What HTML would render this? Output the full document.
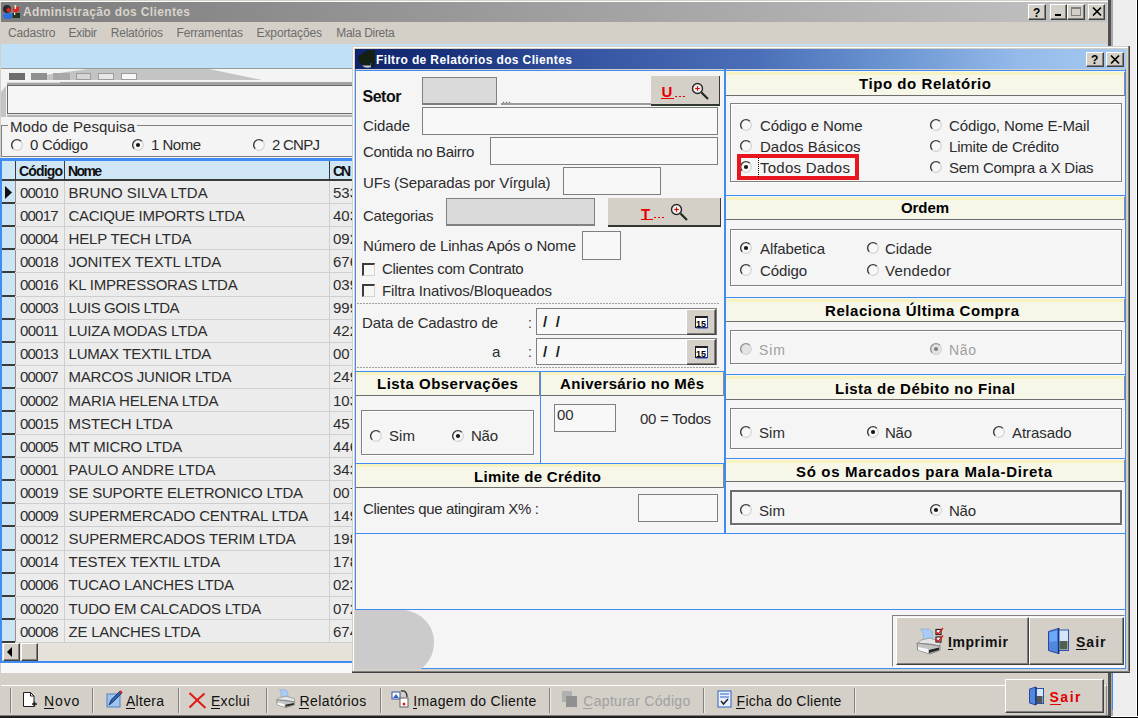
<!DOCTYPE html>
<html><head><meta charset="utf-8"><style>
html,body{margin:0;padding:0;}
body{width:1138px;height:718px;overflow:hidden;position:relative;background:#eeeeee;font-family:'Liberation Sans', sans-serif;}
.a{position:absolute;box-sizing:border-box;}
.t{position:absolute;white-space:pre;font-family:'Liberation Sans', sans-serif;}
svg{position:absolute;overflow:visible;}
</style></head><body>
<div class="a" style="left:0px;top:0px;width:1111px;height:718px;background:#d4d0c8;"></div>
<div class="a" style="left:1108px;top:0px;width:3px;height:718px;background:#505050;"></div>
<div class="a" style="left:0px;top:0px;width:1108px;height:1px;background:#d4d0c8;"></div>
<div class="a" style="left:0px;top:1px;width:1108px;height:1px;background:#ffffff;"></div>
<div class="a" style="left:1px;top:2px;width:1106px;height:20px;background:linear-gradient(90deg,#7c7c7c 0%,#c2c2c2 100%);"></div>
<div class="a" style="left:1111px;top:0px;width:25px;height:718px;background:#eeeeee;"></div>
<div class="a" style="left:1111px;top:0px;width:2px;height:718px;background:#a8a8a8;"></div>
<div class="a" style="left:1136px;top:0px;width:1px;height:718px;background:#ffffff;"></div>
<div class="a" style="left:1137px;top:0px;width:1px;height:718px;background:#000000;"></div>
<svg style="left:0px;top:0px" width="22" height="22" viewBox="0 0 22 22"><circle cx="7" cy="9" r="4" fill="#282828"/><path d="M6 10 L8.5 7.5 L11 10 L8.5 12.7 Z" fill="#e82020"/><ellipse cx="7.8" cy="16" rx="4.8" ry="3" fill="#2a70e0"/><rect x="12.5" y="13" width="7.5" height="5" fill="#203820"/><path d="M13 7 H19 V10 Q17.5 12.8 15.5 12.8 Q13.5 12.8 13 10 Z" fill="#e82020"/><rect x="14.5" y="5" width="1.6" height="4" fill="#eee8d0"/><rect x="14" y="12.5" width="1.3" height="2.5" fill="#e0e0e0"/></svg>
<div class="t" style="left:23px;top:5px;font-size:12px;line-height:14px;font-weight:700;color:#d8d4cc;letter-spacing:0.36px;">Administração dos Clientes</div>
<div class="a" style="left:1028px;top:4px;width:18px;height:16px;background:#d4d0c8;border:1px solid;border-color:#ffffff #404040 #404040 #ffffff;box-shadow:inset -1px -1px 0 #808080;"></div>
<div class="a" style="left:1050px;top:4px;width:17px;height:16px;background:#d4d0c8;border:1px solid;border-color:#ffffff #404040 #404040 #ffffff;box-shadow:inset -1px -1px 0 #808080;"></div>
<div class="a" style="left:1067px;top:4px;width:18px;height:16px;background:#d4d0c8;border:1px solid;border-color:#ffffff #404040 #404040 #ffffff;box-shadow:inset -1px -1px 0 #808080;"></div>
<div class="a" style="left:1088px;top:4px;width:17px;height:16px;background:#d4d0c8;border:1px solid;border-color:#ffffff #404040 #404040 #ffffff;box-shadow:inset -1px -1px 0 #808080;"></div>
<div class="t" style="left:1033px;top:6px;font-size:12px;line-height:14px;font-weight:700;">?</div>
<div class="a" style="left:1055px;top:14px;width:6px;height:2px;background:#000;"></div>
<div class="a" style="left:1071px;top:7px;width:10px;height:9px;border:1px solid #808080;border-top:2px solid #808080;"></div>
<svg style="left:1092px;top:7px" width="10" height="9" viewBox="0 0 10 9"><path d="M1 0.5 L9 8.5 M9 0.5 L1 8.5" stroke="#000" stroke-width="1.7"/></svg>
<div class="t" style="left:8px;top:26px;font-size:12px;line-height:14px;color:#6c6c6c;letter-spacing:-0.17px;">Cadastro</div>
<div class="t" style="left:68.5px;top:26px;font-size:12px;line-height:14px;color:#6c6c6c;letter-spacing:-0.30px;">Exibir</div>
<div class="t" style="left:110.7px;top:26px;font-size:12px;line-height:14px;color:#6c6c6c;letter-spacing:-0.19px;">Relatórios</div>
<div class="t" style="left:176.5px;top:26px;font-size:12px;line-height:14px;color:#6c6c6c;letter-spacing:-0.16px;">Ferramentas</div>
<div class="t" style="left:256.6px;top:26px;font-size:12px;line-height:14px;color:#6c6c6c;letter-spacing:-0.13px;">Exportações</div>
<div class="t" style="left:336.2px;top:26px;font-size:12px;line-height:14px;color:#6c6c6c;letter-spacing:-0.28px;">Mala Direta</div>
<div class="a" style="left:1px;top:44px;width:1106px;height:24px;background:#bfe0f5;"></div>
<div class="a" style="left:1px;top:68px;width:1106px;height:1px;background:#9a9a9a;"></div>
<div class="a" style="left:1px;top:69px;width:1106px;height:604px;background:#f4f4f4;"></div>
<svg style="left:0px;top:69px" width="352" height="50" viewBox="0 0 352 50"><polygon points="45,6 88,0 209,0 262,11 45,11" fill="#c4c4c4"/><polygon points="1,23 6,17 6,48 1,48" fill="#c4c4c4"/></svg>
<div class="a" style="left:9px;top:73px;width:16px;height:7px;background:#6e6e6e;"></div>
<div class="a" style="left:31px;top:73px;width:16px;height:7px;background:#909090;"></div>
<div class="a" style="left:53px;top:73px;width:17px;height:7px;background:#a8a8a8;"></div>
<div class="a" style="left:76px;top:73px;width:15px;height:7px;background:#d6d6d6;border:1px solid #9c9c9c;"></div>
<div class="a" style="left:98px;top:73px;width:16px;height:7px;background:#e8e8e8;border:1px solid #9c9c9c;"></div>
<div class="a" style="left:121px;top:73px;width:16px;height:7px;background:#f8f8f8;border:1px solid #9c9c9c;"></div>
<div class="a" style="left:7px;top:82px;width:345px;height:3px;background:#a4a4a4;"></div>
<div class="a" style="left:7px;top:82px;width:53px;height:1px;background:#d8d8d8;"></div>
<div class="a" style="left:7px;top:85px;width:345px;height:29px;background:#f6f6f6;border:1px solid #6a6a6a;border-right:none;"></div>
<div class="a" style="left:7px;top:114px;width:345px;height:3px;background:#b4b4b4;"></div>
<div class="a" style="left:7px;top:114px;width:345px;height:1px;background:#e6e6e6;"></div>
<div class="a" style="left:1px;top:125px;width:351px;height:32px;border:1px solid #808080;border-right:none;"></div>
<div class="a" style="left:8px;top:120px;width:129px;height:13px;background:#f4f4f4;"></div>
<div class="t" style="left:10px;top:118px;font-size:15px;line-height:17px;color:#2c2c2c;letter-spacing:0.05px;">Modo de Pesquisa</div>
<svg style="left:11px;top:139px" width="12" height="12" viewBox="0 0 12 12"><circle cx="6" cy="6" r="5" fill="#f8f8f8"/><path d="M9.8 2.2 A5.3 5.3 0 0 1 2.2 9.8" fill="none" stroke="#d8d4cc" stroke-width="1.2"/><path d="M9.8 2.2 A5.3 5.3 0 0 0 2.2 9.8" fill="none" stroke="#383838" stroke-width="1.4"/></svg>
<div class="t" style="left:30px;top:136px;font-size:15px;line-height:17px;color:#2c2c2c;letter-spacing:-0.29px;">0 Código</div>
<svg style="left:132px;top:139px" width="12" height="12" viewBox="0 0 12 12"><circle cx="6" cy="6" r="5" fill="#f8f8f8"/><path d="M9.8 2.2 A5.3 5.3 0 0 1 2.2 9.8" fill="none" stroke="#d8d4cc" stroke-width="1.2"/><path d="M9.8 2.2 A5.3 5.3 0 0 0 2.2 9.8" fill="none" stroke="#383838" stroke-width="1.4"/><circle cx="6" cy="6" r="2.1" fill="#101810"/></svg>
<div class="t" style="left:151px;top:136px;font-size:15px;line-height:17px;color:#2c2c2c;letter-spacing:-0.51px;">1 Nome</div>
<svg style="left:253px;top:139px" width="12" height="12" viewBox="0 0 12 12"><circle cx="6" cy="6" r="5" fill="#f8f8f8"/><path d="M9.8 2.2 A5.3 5.3 0 0 1 2.2 9.8" fill="none" stroke="#d8d4cc" stroke-width="1.2"/><path d="M9.8 2.2 A5.3 5.3 0 0 0 2.2 9.8" fill="none" stroke="#383838" stroke-width="1.4"/></svg>
<div class="t" style="left:272px;top:136px;font-size:15px;line-height:17px;color:#2c2c2c;letter-spacing:-0.74px;">2 CNPJ</div>
<div class="a" style="left:0px;top:158px;width:352px;height:505px;background:#408cf2;"></div>
<div class="a" style="left:2px;top:161px;width:350px;height:500px;background:#ececec;"></div>
<div class="a" style="left:2px;top:161px;width:350px;height:19px;background:#cfe6f7;"></div>
<div class="a" style="left:2px;top:179px;width:350px;height:2px;background:#3a3a3a;"></div>
<div class="a" style="left:15px;top:161px;width:1px;height:19px;background:#3a3a3a;"></div>
<div class="a" style="left:64px;top:161px;width:1px;height:19px;background:#3a3a3a;"></div>
<div class="a" style="left:329px;top:161px;width:1px;height:19px;background:#3a3a3a;"></div>
<div class="t" style="left:19px;top:163px;font-size:14px;line-height:16px;font-weight:700;color:#101010;letter-spacing:-0.84px;">Código</div>
<div class="t" style="left:68px;top:163px;font-size:14px;line-height:16px;font-weight:700;color:#101010;letter-spacing:-1.64px;">Nome</div>
<div class="t" style="left:333px;top:163px;font-size:14px;line-height:16px;font-weight:700;color:#101010;letter-spacing:-2.23px;">CN</div>
<div class="a" style="left:2px;top:181px;width:13px;height:22px;background:#cde4f5;"></div>
<div class="a" style="left:2px;top:202px;width:13px;height:2px;background:#3a3a3a;"></div>
<div class="a" style="left:15px;top:181px;width:1px;height:22px;background:#909090;"></div>
<div class="a" style="left:16px;top:203px;width:336px;height:1px;background:#cfcfcf;"></div>
<div class="t" style="left:20px;top:184px;font-size:15px;line-height:17px;color:#2c2c2c;letter-spacing:-0.80px;">00010</div>
<div class="t" style="left:68.6px;top:184px;font-size:15px;line-height:17px;color:#2c2c2c;letter-spacing:-0.01px;">BRUNO SILVA LTDA</div>
<div class="t" style="left:333px;top:184px;font-size:15px;line-height:17px;color:#2c2c2c;">533</div>
<div class="a" style="left:2px;top:204px;width:13px;height:22px;background:#cde4f5;"></div>
<div class="a" style="left:2px;top:225px;width:13px;height:2px;background:#3a3a3a;"></div>
<div class="a" style="left:15px;top:204px;width:1px;height:22px;background:#909090;"></div>
<div class="a" style="left:16px;top:226px;width:336px;height:1px;background:#cfcfcf;"></div>
<div class="t" style="left:20px;top:207px;font-size:15px;line-height:17px;color:#2c2c2c;letter-spacing:-0.80px;">00017</div>
<div class="t" style="left:68.6px;top:207px;font-size:15px;line-height:17px;color:#2c2c2c;letter-spacing:-0.31px;">CACIQUE IMPORTS LTDA</div>
<div class="t" style="left:333px;top:207px;font-size:15px;line-height:17px;color:#2c2c2c;">403</div>
<div class="a" style="left:2px;top:227px;width:13px;height:22px;background:#cde4f5;"></div>
<div class="a" style="left:2px;top:248px;width:13px;height:2px;background:#3a3a3a;"></div>
<div class="a" style="left:15px;top:227px;width:1px;height:22px;background:#909090;"></div>
<div class="a" style="left:16px;top:249px;width:336px;height:1px;background:#cfcfcf;"></div>
<div class="t" style="left:20px;top:230px;font-size:15px;line-height:17px;color:#2c2c2c;letter-spacing:-0.80px;">00004</div>
<div class="t" style="left:68.6px;top:230px;font-size:15px;line-height:17px;color:#2c2c2c;letter-spacing:-0.16px;">HELP TECH LTDA</div>
<div class="t" style="left:333px;top:230px;font-size:15px;line-height:17px;color:#2c2c2c;">092</div>
<div class="a" style="left:2px;top:250px;width:13px;height:22px;background:#cde4f5;"></div>
<div class="a" style="left:2px;top:271px;width:13px;height:2px;background:#3a3a3a;"></div>
<div class="a" style="left:15px;top:250px;width:1px;height:22px;background:#909090;"></div>
<div class="a" style="left:16px;top:272px;width:336px;height:1px;background:#cfcfcf;"></div>
<div class="t" style="left:20px;top:253px;font-size:15px;line-height:17px;color:#2c2c2c;letter-spacing:-0.80px;">00018</div>
<div class="t" style="left:68.6px;top:253px;font-size:15px;line-height:17px;color:#2c2c2c;letter-spacing:-0.13px;">JONITEX TEXTL LTDA</div>
<div class="t" style="left:333px;top:253px;font-size:15px;line-height:17px;color:#2c2c2c;">676</div>
<div class="a" style="left:2px;top:273px;width:13px;height:23px;background:#cde4f5;"></div>
<div class="a" style="left:2px;top:295px;width:13px;height:2px;background:#3a3a3a;"></div>
<div class="a" style="left:15px;top:273px;width:1px;height:23px;background:#909090;"></div>
<div class="a" style="left:16px;top:296px;width:336px;height:1px;background:#cfcfcf;"></div>
<div class="t" style="left:20px;top:276px;font-size:15px;line-height:17px;color:#2c2c2c;letter-spacing:-0.80px;">00016</div>
<div class="t" style="left:68.6px;top:276px;font-size:15px;line-height:17px;color:#2c2c2c;letter-spacing:-0.24px;">KL IMPRESSORAS LTDA</div>
<div class="t" style="left:333px;top:276px;font-size:15px;line-height:17px;color:#2c2c2c;">039</div>
<div class="a" style="left:2px;top:297px;width:13px;height:22px;background:#cde4f5;"></div>
<div class="a" style="left:2px;top:318px;width:13px;height:2px;background:#3a3a3a;"></div>
<div class="a" style="left:15px;top:297px;width:1px;height:22px;background:#909090;"></div>
<div class="a" style="left:16px;top:319px;width:336px;height:1px;background:#cfcfcf;"></div>
<div class="t" style="left:20px;top:299px;font-size:15px;line-height:17px;color:#2c2c2c;letter-spacing:-0.80px;">00003</div>
<div class="t" style="left:68.6px;top:299px;font-size:15px;line-height:17px;color:#2c2c2c;letter-spacing:-0.42px;">LUIS GOIS LTDA</div>
<div class="t" style="left:333px;top:299px;font-size:15px;line-height:17px;color:#2c2c2c;">999</div>
<div class="a" style="left:2px;top:320px;width:13px;height:22px;background:#cde4f5;"></div>
<div class="a" style="left:2px;top:341px;width:13px;height:2px;background:#3a3a3a;"></div>
<div class="a" style="left:15px;top:320px;width:1px;height:22px;background:#909090;"></div>
<div class="a" style="left:16px;top:342px;width:336px;height:1px;background:#cfcfcf;"></div>
<div class="t" style="left:20px;top:322px;font-size:15px;line-height:17px;color:#2c2c2c;letter-spacing:-0.53px;">00011</div>
<div class="t" style="left:68.6px;top:322px;font-size:15px;line-height:17px;color:#2c2c2c;letter-spacing:-0.22px;">LUIZA MODAS LTDA</div>
<div class="t" style="left:333px;top:322px;font-size:15px;line-height:17px;color:#2c2c2c;">422</div>
<div class="a" style="left:2px;top:343px;width:13px;height:22px;background:#cde4f5;"></div>
<div class="a" style="left:2px;top:364px;width:13px;height:2px;background:#3a3a3a;"></div>
<div class="a" style="left:15px;top:343px;width:1px;height:22px;background:#909090;"></div>
<div class="a" style="left:16px;top:365px;width:336px;height:1px;background:#cfcfcf;"></div>
<div class="t" style="left:20px;top:345px;font-size:15px;line-height:17px;color:#2c2c2c;letter-spacing:-0.80px;">00013</div>
<div class="t" style="left:68.6px;top:345px;font-size:15px;line-height:17px;color:#2c2c2c;letter-spacing:-0.29px;">LUMAX TEXTIL LTDA</div>
<div class="t" style="left:333px;top:345px;font-size:15px;line-height:17px;color:#2c2c2c;">007</div>
<div class="a" style="left:2px;top:366px;width:13px;height:22px;background:#cde4f5;"></div>
<div class="a" style="left:2px;top:387px;width:13px;height:2px;background:#3a3a3a;"></div>
<div class="a" style="left:15px;top:366px;width:1px;height:22px;background:#909090;"></div>
<div class="a" style="left:16px;top:388px;width:336px;height:1px;background:#cfcfcf;"></div>
<div class="t" style="left:20px;top:368px;font-size:15px;line-height:17px;color:#2c2c2c;letter-spacing:-0.80px;">00007</div>
<div class="t" style="left:68.6px;top:368px;font-size:15px;line-height:17px;color:#2c2c2c;letter-spacing:-0.25px;">MARCOS JUNIOR LTDA</div>
<div class="t" style="left:333px;top:368px;font-size:15px;line-height:17px;color:#2c2c2c;">249</div>
<div class="a" style="left:2px;top:389px;width:13px;height:22px;background:#cde4f5;"></div>
<div class="a" style="left:2px;top:410px;width:13px;height:2px;background:#3a3a3a;"></div>
<div class="a" style="left:15px;top:389px;width:1px;height:22px;background:#909090;"></div>
<div class="a" style="left:16px;top:411px;width:336px;height:1px;background:#cfcfcf;"></div>
<div class="t" style="left:20px;top:392px;font-size:15px;line-height:17px;color:#2c2c2c;letter-spacing:-0.80px;">00002</div>
<div class="t" style="left:68.6px;top:392px;font-size:15px;line-height:17px;color:#2c2c2c;letter-spacing:-0.09px;">MARIA HELENA LTDA</div>
<div class="t" style="left:333px;top:392px;font-size:15px;line-height:17px;color:#2c2c2c;">103</div>
<div class="a" style="left:2px;top:412px;width:13px;height:22px;background:#cde4f5;"></div>
<div class="a" style="left:2px;top:433px;width:13px;height:2px;background:#3a3a3a;"></div>
<div class="a" style="left:15px;top:412px;width:1px;height:22px;background:#909090;"></div>
<div class="a" style="left:16px;top:434px;width:336px;height:1px;background:#cfcfcf;"></div>
<div class="t" style="left:20px;top:415px;font-size:15px;line-height:17px;color:#2c2c2c;letter-spacing:-0.80px;">00015</div>
<div class="t" style="left:68.6px;top:415px;font-size:15px;line-height:17px;color:#2c2c2c;letter-spacing:-0.07px;">MSTECH LTDA</div>
<div class="t" style="left:333px;top:415px;font-size:15px;line-height:17px;color:#2c2c2c;">457</div>
<div class="a" style="left:2px;top:435px;width:13px;height:22px;background:#cde4f5;"></div>
<div class="a" style="left:2px;top:456px;width:13px;height:2px;background:#3a3a3a;"></div>
<div class="a" style="left:15px;top:435px;width:1px;height:22px;background:#909090;"></div>
<div class="a" style="left:16px;top:457px;width:336px;height:1px;background:#cfcfcf;"></div>
<div class="t" style="left:20px;top:438px;font-size:15px;line-height:17px;color:#2c2c2c;letter-spacing:-0.80px;">00005</div>
<div class="t" style="left:68.6px;top:438px;font-size:15px;line-height:17px;color:#2c2c2c;letter-spacing:-0.27px;">MT MICRO LTDA</div>
<div class="t" style="left:333px;top:438px;font-size:15px;line-height:17px;color:#2c2c2c;">446</div>
<div class="a" style="left:2px;top:458px;width:13px;height:22px;background:#cde4f5;"></div>
<div class="a" style="left:2px;top:479px;width:13px;height:2px;background:#3a3a3a;"></div>
<div class="a" style="left:15px;top:458px;width:1px;height:22px;background:#909090;"></div>
<div class="a" style="left:16px;top:480px;width:336px;height:1px;background:#cfcfcf;"></div>
<div class="t" style="left:20px;top:461px;font-size:15px;line-height:17px;color:#2c2c2c;letter-spacing:-0.80px;">00001</div>
<div class="t" style="left:68.6px;top:461px;font-size:15px;line-height:17px;color:#2c2c2c;">PAULO ANDRE LTDA</div>
<div class="t" style="left:333px;top:461px;font-size:15px;line-height:17px;color:#2c2c2c;">343</div>
<div class="a" style="left:2px;top:481px;width:13px;height:22px;background:#cde4f5;"></div>
<div class="a" style="left:2px;top:502px;width:13px;height:2px;background:#3a3a3a;"></div>
<div class="a" style="left:15px;top:481px;width:1px;height:22px;background:#909090;"></div>
<div class="a" style="left:16px;top:503px;width:336px;height:1px;background:#cfcfcf;"></div>
<div class="t" style="left:20px;top:484px;font-size:15px;line-height:17px;color:#2c2c2c;letter-spacing:-0.80px;">00019</div>
<div class="t" style="left:68.6px;top:484px;font-size:15px;line-height:17px;color:#2c2c2c;letter-spacing:-0.20px;">SE SUPORTE ELETRONICO LTDA</div>
<div class="t" style="left:333px;top:484px;font-size:15px;line-height:17px;color:#2c2c2c;">007</div>
<div class="a" style="left:2px;top:504px;width:13px;height:22px;background:#cde4f5;"></div>
<div class="a" style="left:2px;top:525px;width:13px;height:2px;background:#3a3a3a;"></div>
<div class="a" style="left:15px;top:504px;width:1px;height:22px;background:#909090;"></div>
<div class="a" style="left:16px;top:526px;width:336px;height:1px;background:#cfcfcf;"></div>
<div class="t" style="left:20px;top:507px;font-size:15px;line-height:17px;color:#2c2c2c;letter-spacing:-0.80px;">00009</div>
<div class="t" style="left:68.6px;top:507px;font-size:15px;line-height:17px;color:#2c2c2c;letter-spacing:-0.15px;">SUPERMERCADO CENTRAL LTDA</div>
<div class="t" style="left:333px;top:507px;font-size:15px;line-height:17px;color:#2c2c2c;">149</div>
<div class="a" style="left:2px;top:527px;width:13px;height:23px;background:#cde4f5;"></div>
<div class="a" style="left:2px;top:549px;width:13px;height:2px;background:#3a3a3a;"></div>
<div class="a" style="left:15px;top:527px;width:1px;height:23px;background:#909090;"></div>
<div class="a" style="left:16px;top:550px;width:336px;height:1px;background:#cfcfcf;"></div>
<div class="t" style="left:20px;top:530px;font-size:15px;line-height:17px;color:#2c2c2c;letter-spacing:-0.80px;">00012</div>
<div class="t" style="left:68.6px;top:530px;font-size:15px;line-height:17px;color:#2c2c2c;letter-spacing:-0.14px;">SUPERMERCADOS TERIM LTDA</div>
<div class="t" style="left:333px;top:530px;font-size:15px;line-height:17px;color:#2c2c2c;">198</div>
<div class="a" style="left:2px;top:551px;width:13px;height:22px;background:#cde4f5;"></div>
<div class="a" style="left:2px;top:572px;width:13px;height:2px;background:#3a3a3a;"></div>
<div class="a" style="left:15px;top:551px;width:1px;height:22px;background:#909090;"></div>
<div class="a" style="left:16px;top:573px;width:336px;height:1px;background:#cfcfcf;"></div>
<div class="t" style="left:20px;top:553px;font-size:15px;line-height:17px;color:#2c2c2c;letter-spacing:-0.80px;">00014</div>
<div class="t" style="left:68.6px;top:553px;font-size:15px;line-height:17px;color:#2c2c2c;letter-spacing:-0.13px;">TESTEX TEXTIL LTDA</div>
<div class="t" style="left:333px;top:553px;font-size:15px;line-height:17px;color:#2c2c2c;">178</div>
<div class="a" style="left:2px;top:574px;width:13px;height:22px;background:#cde4f5;"></div>
<div class="a" style="left:2px;top:595px;width:13px;height:2px;background:#3a3a3a;"></div>
<div class="a" style="left:15px;top:574px;width:1px;height:22px;background:#909090;"></div>
<div class="a" style="left:16px;top:596px;width:336px;height:1px;background:#cfcfcf;"></div>
<div class="t" style="left:20px;top:576px;font-size:15px;line-height:17px;color:#2c2c2c;letter-spacing:-0.80px;">00006</div>
<div class="t" style="left:68.6px;top:576px;font-size:15px;line-height:17px;color:#2c2c2c;letter-spacing:-0.20px;">TUCAO LANCHES LTDA</div>
<div class="t" style="left:333px;top:576px;font-size:15px;line-height:17px;color:#2c2c2c;">023</div>
<div class="a" style="left:2px;top:597px;width:13px;height:22px;background:#cde4f5;"></div>
<div class="a" style="left:2px;top:618px;width:13px;height:2px;background:#3a3a3a;"></div>
<div class="a" style="left:15px;top:597px;width:1px;height:22px;background:#909090;"></div>
<div class="a" style="left:16px;top:619px;width:336px;height:1px;background:#cfcfcf;"></div>
<div class="t" style="left:20px;top:600px;font-size:15px;line-height:17px;color:#2c2c2c;letter-spacing:-0.80px;">00020</div>
<div class="t" style="left:68.6px;top:600px;font-size:15px;line-height:17px;color:#2c2c2c;letter-spacing:-0.23px;">TUDO EM CALCADOS LTDA</div>
<div class="t" style="left:333px;top:600px;font-size:15px;line-height:17px;color:#2c2c2c;">072</div>
<div class="a" style="left:2px;top:620px;width:13px;height:22px;background:#cde4f5;"></div>
<div class="a" style="left:2px;top:641px;width:13px;height:2px;background:#3a3a3a;"></div>
<div class="a" style="left:15px;top:620px;width:1px;height:22px;background:#909090;"></div>
<div class="a" style="left:16px;top:642px;width:336px;height:1px;background:#cfcfcf;"></div>
<div class="t" style="left:20px;top:623px;font-size:15px;line-height:17px;color:#2c2c2c;letter-spacing:-0.80px;">00008</div>
<div class="t" style="left:68.6px;top:623px;font-size:15px;line-height:17px;color:#2c2c2c;letter-spacing:-0.26px;">ZE LANCHES LTDA</div>
<div class="t" style="left:333px;top:623px;font-size:15px;line-height:17px;color:#2c2c2c;">674</div>
<div class="a" style="left:64px;top:181px;width:1px;height:461px;background:#cfcfcf;"></div>
<div class="a" style="left:329px;top:181px;width:1px;height:461px;background:#cfcfcf;"></div>
<svg style="left:4px;top:186px" width="9" height="13" viewBox="0 0 9 13"><path d="M1 0 L8 6.5 L1 13 Z" fill="#101010"/></svg>
<div class="a" style="left:2px;top:643px;width:350px;height:18px;background:#e6e2da;"></div>
<div class="a" style="left:3px;top:643px;width:17px;height:18px;background:#d4d0c8;border:1px solid;border-color:#ffffff #404040 #404040 #ffffff;box-shadow:inset -1px -1px 0 #808080;"></div>
<div class="a" style="left:21px;top:643px;width:17px;height:18px;background:#d4d0c8;border:1px solid;border-color:#ffffff #404040 #404040 #ffffff;box-shadow:inset -1px -1px 0 #808080;"></div>
<svg style="left:7px;top:647px" width="6" height="10" viewBox="0 0 6 10"><path d="M5 0 L0 5 L5 10 Z" fill="#000"/></svg>
<div class="a" style="left:1px;top:663px;width:351px;height:10px;background:#f8f8f8;"></div>
<div class="a" style="left:1px;top:673px;width:1107px;height:42px;background:#d4d0c8;"></div>
<div class="a" style="left:1px;top:685px;width:1107px;height:1px;background:#ffffff;"></div>
<div class="a" style="left:0px;top:715px;width:1108px;height:1px;background:#808080;"></div>
<div class="a" style="left:0px;top:716px;width:1111px;height:2px;background:#202020;"></div>
<div class="a" style="left:1111px;top:716px;width:27px;height:1px;background:#ffffff;"></div>
<div class="a" style="left:1111px;top:717px;width:27px;height:1px;background:#000;"></div>
<div class="a" style="left:10px;top:688px;width:1px;height:25px;background:#808080;"></div>
<div class="a" style="left:11px;top:688px;width:1px;height:25px;background:#ecebe6;"></div>
<div class="a" style="left:92px;top:688px;width:1px;height:25px;background:#808080;"></div>
<div class="a" style="left:93px;top:688px;width:1px;height:25px;background:#ecebe6;"></div>
<div class="a" style="left:178px;top:688px;width:1px;height:25px;background:#808080;"></div>
<div class="a" style="left:179px;top:688px;width:1px;height:25px;background:#ecebe6;"></div>
<div class="a" style="left:266px;top:688px;width:1px;height:25px;background:#808080;"></div>
<div class="a" style="left:267px;top:688px;width:1px;height:25px;background:#ecebe6;"></div>
<div class="a" style="left:380px;top:688px;width:1px;height:25px;background:#808080;"></div>
<div class="a" style="left:381px;top:688px;width:1px;height:25px;background:#ecebe6;"></div>
<div class="a" style="left:549px;top:688px;width:1px;height:25px;background:#808080;"></div>
<div class="a" style="left:550px;top:688px;width:1px;height:25px;background:#ecebe6;"></div>
<div class="a" style="left:703px;top:688px;width:1px;height:25px;background:#808080;"></div>
<div class="a" style="left:704px;top:688px;width:1px;height:25px;background:#ecebe6;"></div>
<div class="a" style="left:854px;top:688px;width:1px;height:25px;background:#808080;"></div>
<div class="a" style="left:855px;top:688px;width:1px;height:25px;background:#ecebe6;"></div>
<div class="t" style="left:44px;top:693px;font-size:14px;line-height:16px;color:#101010;letter-spacing:0.90px;">Novo</div>
<div class="a" style="left:44px;top:708px;width:10px;height:1px;background:#101010;"></div>
<div class="t" style="left:126px;top:693px;font-size:14px;line-height:16px;color:#101010;letter-spacing:0.28px;">Altera</div>
<div class="a" style="left:126px;top:708px;width:9px;height:1px;background:#101010;"></div>
<div class="t" style="left:211px;top:693px;font-size:14px;line-height:16px;color:#101010;letter-spacing:0.27px;">Exclui</div>
<div class="a" style="left:211px;top:708px;width:9px;height:1px;background:#101010;"></div>
<div class="t" style="left:299.5px;top:693px;font-size:14px;line-height:16px;color:#101010;letter-spacing:0.42px;">Relatórios</div>
<div class="a" style="left:299px;top:708px;width:10px;height:1px;background:#101010;"></div>
<div class="t" style="left:413.3px;top:693px;font-size:14px;line-height:16px;color:#101010;letter-spacing:0.34px;">Imagem do Cliente</div>
<div class="a" style="left:413px;top:708px;width:4px;height:1px;background:#101010;"></div>
<div class="t" style="left:583.3px;top:693px;font-size:14px;line-height:16px;color:#a0a0a0;letter-spacing:0.30px;">Capturar Código</div>
<div class="a" style="left:583px;top:708px;width:9px;height:1px;background:#a0a0a0;"></div>
<div class="t" style="left:736.6px;top:693px;font-size:14px;line-height:16px;color:#101010;letter-spacing:0.24px;">Ficha do Cliente</div>
<div class="a" style="left:736px;top:708px;width:9px;height:1px;background:#101010;"></div>
<svg style="left:22px;top:691px" width="16" height="17" viewBox="0 0 16 17"><path d="M1.5 1.5 H8.5 L12 5 V15.5 H1.5 Z" fill="#fff" stroke="#202020"/><path d="M8.5 1.5 V5 H12" fill="none" stroke="#202020"/><path d="M10 13 h5 M12.5 10.5 v5" stroke="#202020" stroke-width="1.5"/></svg>
<svg style="left:106px;top:690px" width="17" height="18" viewBox="0 0 17 18"><rect x="1" y="4" width="13" height="13" fill="#9cc4ec" stroke="#5080c0"/><path d="M3 15 L5 10 L14 1 L16 3 L7 12 Z" fill="#3060b0" stroke="#102050" stroke-width="0.7"/><path d="M14 1 L16 3" stroke="#e02020" stroke-width="2"/></svg>
<svg style="left:276px;top:689px" width="20" height="20" viewBox="916 628 28 28"><path d="M921 629 H929.5 L932.5 632 V640 H924 L923 633 Z" fill="#a8cdf4" stroke="#80a8d8" stroke-width="0.8"/><path d="M921 640 L930 638 L942 641.5 V646 L930 644 L917.5 643.5 Z" fill="#e4e4e4" stroke="#8a8a8a" stroke-width="0.9"/><path d="M917 643 L930 644.5 L942 646 V650 L930 654 L917.5 650 Z" fill="#c4c4c4" stroke="#6a6a6a" stroke-width="0.9"/><path d="M918 647 L928 649 V653 L918 650 Z" fill="#f8f8f8"/><path d="M929 650 L941 647.5 V650 L929 653 Z" fill="#202820"/></svg>
<svg style="left:188px;top:692px" width="19" height="17" viewBox="0 0 19 17"><path d="M1.5 1 Q9 8 17.5 16 M16.5 1.5 Q9 8 1.5 15.5" stroke="#e01818" stroke-width="2" fill="none"/></svg>
<svg style="left:391px;top:690px" width="19" height="18" viewBox="0 0 19 18"><rect x="1" y="2" width="8" height="7" fill="#fff" stroke="#3050a0"/><path d="M2 8 L5 4 L8 8z" fill="#3060c0"/><rect x="9" y="8" width="8" height="9" fill="#fff" stroke="#606060"/><circle cx="13" cy="14" r="1.5" fill="#e02020"/><path d="M10 1 q6 -1 6 6" stroke="#303030" fill="none" stroke-width="1.3"/></svg>
<svg style="left:561px;top:690px" width="17" height="18" viewBox="0 0 17 18"><rect x="1" y="1" width="10" height="11" fill="#b0b0b0"/><rect x="5" y="6" width="11" height="11" fill="#909090"/></svg>
<svg style="left:717px;top:690px" width="15" height="18" viewBox="0 0 15 18"><rect x="1" y="1" width="13" height="16" fill="#e8f0ff" stroke="#3060c0"/><path d="M3 4 h9 M3 7 h9" stroke="#3060c0"/><path d="M4 11 L6.5 14 L11 9" stroke="#202020" stroke-width="1.5" fill="none"/></svg>
<div class="a" style="left:1005px;top:679px;width:99px;height:34px;background:#d4d0c8;border:1px solid;border-color:#ffffff #404040 #404040 #ffffff;box-shadow:inset -1px -1px 0 #808080;"></div>
<svg style="left:1028px;top:686px" width="18" height="20" viewBox="0 0 18 20"><rect x="7.5" y="2.5" width="8" height="15" fill="#d4e6f8" stroke="#3050b0"/><rect x="8.5" y="10" width="6" height="7" fill="#505850"/><path d="M1.5 3 L8 1 V19 L1.5 17 Z" fill="#5088e0" stroke="#2a48a0"/><path d="M8 1 V19" stroke="#1a3080" stroke-width="1.4"/></svg>
<div class="t" style="left:1049.5px;top:689px;font-size:14px;line-height:16px;font-weight:700;color:#e00000;letter-spacing:1.51px;">Sair</div>
<div class="a" style="left:1050px;top:704px;width:11px;height:1px;background:#e00000;"></div>
<div class="a" style="left:1112px;top:672px;width:1px;height:38px;background:#408cf2;"></div>
<div class="a" style="left:1106px;top:685px;width:1px;height:30px;background:#8a8a8a;"></div>
<div class="a" style="left:1104px;top:685px;width:2px;height:1px;background:#ffffff;"></div>
<div class="a" style="left:352px;top:46px;width:778px;height:627px;background:#d4d0c8;"></div>
<div class="a" style="left:352px;top:46px;width:777px;height:1px;background:#d4d0c8;"></div>
<div class="a" style="left:353px;top:47px;width:775px;height:1px;background:#ffffff;"></div>
<div class="a" style="left:353px;top:47px;width:1px;height:624px;background:#ffffff;"></div>
<div class="a" style="left:1128px;top:46px;width:1px;height:626px;background:#808080;"></div>
<div class="a" style="left:1129px;top:46px;width:1px;height:627px;background:#404040;"></div>
<div class="a" style="left:352px;top:671px;width:778px;height:1px;background:#808080;"></div>
<div class="a" style="left:352px;top:672px;width:778px;height:1px;background:#404040;"></div>
<div class="a" style="left:355px;top:49px;width:771px;height:20px;background:linear-gradient(90deg,#0e246c 0%,#1c3580 15%,#3452a0 28%,#4a6fb8 52%,#6c96d2 70%,#94baea 86%,#a6caf0 100%);"></div>
<svg style="left:352px;top:46px" width="26" height="24" viewBox="352 46 26 24"><path d="M368 50 H375 V67 H369 L366 66 L362 65 L359 62 L358 58 L359 56 L362 54 L365 52 Z" fill="#142014"/><path d="M362 65.5 Q366 69 371 67 L371 65.5 Z" fill="#c8c8c8"/><rect x="370" y="63" width="1.5" height="2" fill="#2040a0"/></svg>
<div class="t" style="left:376px;top:53px;font-size:12px;line-height:14px;font-weight:700;color:#ffffff;letter-spacing:0.37px;">Filtro de Relatórios dos Clientes</div>
<div class="a" style="left:1086px;top:52px;width:18px;height:15px;background:#d4d0c8;border:1px solid;border-color:#ffffff #404040 #404040 #ffffff;box-shadow:inset -1px -1px 0 #808080;"></div>
<div class="a" style="left:1106px;top:52px;width:18px;height:15px;background:#d4d0c8;border:1px solid;border-color:#ffffff #404040 #404040 #ffffff;box-shadow:inset -1px -1px 0 #808080;"></div>
<div class="t" style="left:1091px;top:53px;font-size:12px;line-height:14px;font-weight:700;">?</div>
<svg style="left:1110px;top:55px" width="10" height="9" viewBox="0 0 10 9"><path d="M1 0.5 L9 8.5 M9 0.5 L1 8.5" stroke="#000" stroke-width="1.7"/></svg>
<div class="a" style="left:355px;top:69px;width:771px;height:600px;background:#f5f5f6;"></div>
<div class="a" style="left:355px;top:69px;width:771px;height:1px;background:#d4d0c8;"></div>
<div class="a" style="left:355px;top:70px;width:771px;height:1px;background:#408cf2;"></div>
<div class="a" style="left:355px;top:69px;width:1px;height:541px;background:#408cf2;"></div>
<div class="a" style="left:1125px;top:69px;width:1px;height:600px;background:#408cf2;"></div>
<div class="a" style="left:421px;top:668px;width:705px;height:1px;background:#408cf2;"></div>
<div class="t" style="left:362.5px;top:88px;font-size:16px;line-height:18px;font-weight:700;color:#101010;letter-spacing:-0.48px;">Setor</div>
<div class="a" style="left:422px;top:77px;width:75px;height:28px;background:#dadada;border:1px solid #808080;border-bottom:2px solid #808080;"></div>
<div class="t" style="left:502px;top:93px;font-size:11px;line-height:13px;color:#505050;">...</div>
<div class="a" style="left:501px;top:103px;width:151px;height:2px;background:#9a9a9a;"></div>
<div class="a" style="left:651px;top:76px;width:69px;height:30px;background:#d4d0c8;border-right:1px solid #3a3a3a;border-bottom:2px solid #303830;"></div>
<div class="t" style="left:661.5px;top:83px;font-size:15px;line-height:17px;font-weight:700;color:#e80000;">U</div>
<div class="a" style="left:661px;top:98px;width:13px;height:1px;background:#e80000;"></div>
<div class="a" style="left:675px;top:96px;width:2px;height:1px;background:#e80000;"></div>
<div class="a" style="left:679px;top:96px;width:2px;height:1px;background:#e80000;"></div>
<div class="a" style="left:683px;top:96px;width:2px;height:1px;background:#e80000;"></div>
<svg style="left:691px;top:82px" width="20" height="20" viewBox="0 0 20 20"><circle cx="6.5" cy="6.5" r="5" fill="#ececec" stroke="#282828" stroke-width="1.4"/><path d="M4.2 6.5h4.6M6.5 4.2v4.6" stroke="#e00000" stroke-width="1.2"/><path d="M10.5 10.5 L17 17" stroke="#1c2a1c" stroke-width="2.2"/></svg>
<div class="t" style="left:363px;top:117px;font-size:15px;line-height:17px;color:#2c2c2c;letter-spacing:-0.11px;">Cidade</div>
<div class="a" style="left:422px;top:107px;width:296px;height:28px;background:#f8f8f8;border:1px solid #7f7f7f;"></div>
<div class="t" style="left:363px;top:143px;font-size:15px;line-height:17px;color:#2c2c2c;letter-spacing:-0.33px;">Contida no Bairro</div>
<div class="a" style="left:490px;top:137px;width:228px;height:28px;background:#f8f8f8;border:1px solid #7f7f7f;"></div>
<div class="t" style="left:363px;top:174px;font-size:15px;line-height:17px;color:#2c2c2c;letter-spacing:-0.16px;">UFs (Separadas por Vírgula)</div>
<div class="a" style="left:563px;top:167px;width:98px;height:28px;background:#f8f8f8;border:1px solid #7f7f7f;"></div>
<div class="t" style="left:363px;top:207px;font-size:15px;line-height:17px;color:#2c2c2c;letter-spacing:-0.23px;">Categorias</div>
<div class="a" style="left:446px;top:198px;width:149px;height:28px;background:#dadada;border:1px solid #808080;border-bottom:2px solid #808080;"></div>
<div class="a" style="left:608px;top:198px;width:113px;height:29px;background:#d4d0c8;border-right:1px solid #3a3a3a;border-bottom:2px solid #303830;"></div>
<div class="t" style="left:641px;top:205px;font-size:15px;line-height:17px;font-weight:700;color:#e80000;">T</div>
<div class="a" style="left:641px;top:219px;width:12px;height:1px;background:#e80000;"></div>
<div class="a" style="left:654px;top:217px;width:2px;height:1px;background:#e80000;"></div>
<div class="a" style="left:658px;top:217px;width:2px;height:1px;background:#e80000;"></div>
<div class="a" style="left:662px;top:217px;width:2px;height:1px;background:#e80000;"></div>
<svg style="left:670px;top:203px" width="20" height="20" viewBox="0 0 20 20"><circle cx="6.5" cy="6.5" r="5" fill="#ececec" stroke="#282828" stroke-width="1.4"/><path d="M4.2 6.5h4.6M6.5 4.2v4.6" stroke="#e00000" stroke-width="1.2"/><path d="M10.5 10.5 L17 17" stroke="#1c2a1c" stroke-width="2.2"/></svg>
<div class="t" style="left:363px;top:237px;font-size:15px;line-height:17px;color:#2c2c2c;letter-spacing:-0.14px;">Número de Linhas Após o Nome</div>
<div class="a" style="left:582px;top:231px;width:39px;height:29px;background:#f8f8f8;border:1px solid #7f7f7f;"></div>
<div class="a" style="left:362px;top:263px;width:13px;height:13px;background:#f6f6f6;border-style:solid;border-width:2px 1px 1px 2px;border-color:#3c3c3c #d8d4cc #d8d4cc #3c3c3c;"></div>
<div class="t" style="left:382px;top:260px;font-size:15px;line-height:17px;color:#2c2c2c;letter-spacing:-0.34px;">Clientes com Contrato</div>
<div class="a" style="left:362px;top:284px;width:13px;height:13px;background:#f6f6f6;border-style:solid;border-width:2px 1px 1px 2px;border-color:#3c3c3c #d8d4cc #d8d4cc #3c3c3c;"></div>
<div class="t" style="left:382px;top:282px;font-size:15px;line-height:17px;color:#2c2c2c;letter-spacing:-0.10px;">Filtra Inativos/Bloqueados</div>
<svg style="left:357px;top:303px" width="362" height="2"><line x1="0" y1="0.5" x2="362" y2="0.5" stroke="#a0a0a0" stroke-dasharray="2 1"/></svg>
<svg style="left:357px;top:367px" width="362" height="2"><line x1="0" y1="0.5" x2="362" y2="0.5" stroke="#a0a0a0" stroke-dasharray="2 1"/></svg>
<div class="t" style="left:362px;top:314px;font-size:15px;line-height:17px;color:#2c2c2c;letter-spacing:-0.13px;">Data de Cadastro de</div>
<div class="t" style="left:492px;top:343px;font-size:15px;line-height:17px;color:#2c2c2c;">a</div>
<div class="t" style="left:528px;top:315px;font-size:14px;line-height:16px;color:#404040;">:</div>
<div class="t" style="left:528px;top:344px;font-size:14px;line-height:16px;color:#404040;">:</div>
<div class="a" style="left:536px;top:308px;width:181px;height:27px;background:#f8f8f8;border:1px solid #7f7f7f;"></div>
<div class="a" style="left:686px;top:309px;width:30px;height:26px;background:#d4d0c8;border:1px solid;border-color:#ffffff #404040 #404040 #ffffff;box-shadow:inset -1px -1px 0 #808080;"></div>
<div class="t" style="left:543px;top:313px;font-size:15px;line-height:17px;font-weight:700;color:#202020;letter-spacing:2.24px;">/ /</div>
<svg style="left:693px;top:315px" width="16" height="14" viewBox="0 0 16 14"><rect x="2.5" y="1.5" width="12" height="11" fill="#fff" stroke="#202020"/><path d="M2.5 2 h12" stroke="#202020" stroke-width="2"/><path d="M14.5 2 v11 h-11" stroke="#2040c0" fill="none"/></svg>
<div class="t" style="left:696px;top:319px;font-size:9px;line-height:10px;font-weight:700;">15</div>
<div class="a" style="left:536px;top:338px;width:181px;height:27px;background:#f8f8f8;border:1px solid #7f7f7f;"></div>
<div class="a" style="left:686px;top:339px;width:30px;height:26px;background:#d4d0c8;border:1px solid;border-color:#ffffff #404040 #404040 #ffffff;box-shadow:inset -1px -1px 0 #808080;"></div>
<div class="t" style="left:543px;top:343px;font-size:15px;line-height:17px;font-weight:700;color:#202020;letter-spacing:2.24px;">/ /</div>
<svg style="left:693px;top:345px" width="16" height="14" viewBox="0 0 16 14"><rect x="2.5" y="1.5" width="12" height="11" fill="#fff" stroke="#202020"/><path d="M2.5 2 h12" stroke="#202020" stroke-width="2"/><path d="M14.5 2 v11 h-11" stroke="#2040c0" fill="none"/></svg>
<div class="t" style="left:696px;top:349px;font-size:9px;line-height:10px;font-weight:700;">15</div>
<div class="a" style="left:355px;top:371px;width:370px;height:1px;background:#408cf2;"></div>
<div class="a" style="left:540px;top:371px;width:1px;height:92px;background:#408cf2;"></div>
<div class="a" style="left:356px;top:372px;width:184px;height:3px;background:#f7f4c2;"></div>
<div class="a" style="left:356px;top:375px;width:184px;height:20px;background:#f6f6e9;"></div>
<div class="a" style="left:356px;top:395px;width:184px;height:1px;background:#6e6e6e;"></div>
<div class="a" style="left:539px;top:372px;width:1px;height:24px;background:#8a8a8a;"></div>
<div class="t" style="left:377px;top:375px;font-size:15px;line-height:17px;font-weight:700;letter-spacing:0.47px;">Lista Observações</div>
<div class="a" style="left:541px;top:372px;width:183px;height:3px;background:#f7f4c2;"></div>
<div class="a" style="left:541px;top:375px;width:183px;height:20px;background:#f6f6e9;"></div>
<div class="a" style="left:541px;top:395px;width:183px;height:1px;background:#6e6e6e;"></div>
<div class="a" style="left:723px;top:372px;width:1px;height:24px;background:#8a8a8a;"></div>
<div class="t" style="left:560px;top:375px;font-size:15px;line-height:17px;font-weight:700;letter-spacing:0.33px;">Aniversário no Mês</div>
<div class="a" style="left:361px;top:410px;width:173px;height:45px;border:1px solid #808080;box-shadow:inset 1px 1px 0 #ffffff, 1px 1px 0 #ffffff;"></div>
<svg style="left:370px;top:430px" width="12" height="12" viewBox="0 0 12 12"><circle cx="6" cy="6" r="5" fill="#f8f8f8"/><path d="M9.8 2.2 A5.3 5.3 0 0 1 2.2 9.8" fill="none" stroke="#d8d4cc" stroke-width="1.2"/><path d="M9.8 2.2 A5.3 5.3 0 0 0 2.2 9.8" fill="none" stroke="#383838" stroke-width="1.4"/></svg>
<div class="t" style="left:389px;top:427px;font-size:15px;line-height:17px;color:#2c2c2c;letter-spacing:0.08px;">Sim</div>
<svg style="left:452px;top:430px" width="12" height="12" viewBox="0 0 12 12"><circle cx="6" cy="6" r="5" fill="#f8f8f8"/><path d="M9.8 2.2 A5.3 5.3 0 0 1 2.2 9.8" fill="none" stroke="#d8d4cc" stroke-width="1.2"/><path d="M9.8 2.2 A5.3 5.3 0 0 0 2.2 9.8" fill="none" stroke="#383838" stroke-width="1.4"/><circle cx="6" cy="6" r="2.1" fill="#101810"/></svg>
<div class="t" style="left:471px;top:427px;font-size:15px;line-height:17px;color:#2c2c2c;letter-spacing:-0.27px;">Não</div>
<div class="a" style="left:554px;top:404px;width:62px;height:28px;background:#f8f8f8;border:1px solid #7f7f7f;"></div>
<div class="t" style="left:557px;top:406px;font-size:15px;line-height:17px;color:#2c2c2c;">00</div>
<div class="t" style="left:640px;top:410px;font-size:15px;line-height:17px;color:#2c2c2c;letter-spacing:-0.28px;">00 = Todos</div>
<div class="a" style="left:355px;top:463px;width:370px;height:1px;background:#408cf2;"></div>
<div class="a" style="left:356px;top:464px;width:368px;height:3px;background:#f7f4c2;"></div>
<div class="a" style="left:356px;top:467px;width:368px;height:20px;background:#f6f6e9;"></div>
<div class="a" style="left:356px;top:487px;width:368px;height:1px;background:#6e6e6e;"></div>
<div class="a" style="left:723px;top:464px;width:1px;height:24px;background:#8a8a8a;"></div>
<div class="t" style="left:474px;top:468px;font-size:15px;line-height:17px;font-weight:700;letter-spacing:0.28px;">Limite de Crédito</div>
<div class="t" style="left:363px;top:500px;font-size:15px;line-height:17px;color:#2c2c2c;letter-spacing:-0.35px;">Clientes que atingiram X% :</div>
<div class="a" style="left:638px;top:494px;width:80px;height:28px;background:#f8f8f8;border:1px solid #7f7f7f;"></div>
<div class="a" style="left:355px;top:533px;width:771px;height:1px;background:#408cf2;"></div>
<div class="a" style="left:355px;top:609px;width:771px;height:1px;background:#408cf2;"></div>
<svg style="left:355px;top:610px" width="80" height="59" viewBox="0 0 80 59"><path d="M0 0 H50 C70 4, 79 18, 79 32 C79 46, 72 54, 66 59 H0 Z" fill="#cbcbcb"/></svg>
<div class="a" style="left:724px;top:69px;width:2px;height:464px;background:#408cf2;"></div>
<div class="a" style="left:726px;top:70px;width:400px;height:1px;background:#408cf2;"></div>
<div class="a" style="left:726px;top:72px;width:399px;height:3px;background:#f7f4c2;"></div>
<div class="a" style="left:726px;top:75px;width:399px;height:20px;background:#f6f6e9;"></div>
<div class="a" style="left:726px;top:95px;width:399px;height:1px;background:#6e6e6e;"></div>
<div class="a" style="left:1124px;top:72px;width:1px;height:24px;background:#8a8a8a;"></div>
<div class="t" style="left:859px;top:75px;font-size:15px;line-height:17px;font-weight:700;letter-spacing:0.56px;">Tipo do Relatório</div>
<div class="a" style="left:730px;top:103px;width:392px;height:79px;border:1px solid #808080;box-shadow:inset 1px 1px 0 #ffffff, 1px 1px 0 #ffffff;"></div>
<svg style="left:740px;top:119px" width="12" height="12" viewBox="0 0 12 12"><circle cx="6" cy="6" r="5" fill="#f8f8f8"/><path d="M9.8 2.2 A5.3 5.3 0 0 1 2.2 9.8" fill="none" stroke="#d8d4cc" stroke-width="1.2"/><path d="M9.8 2.2 A5.3 5.3 0 0 0 2.2 9.8" fill="none" stroke="#383838" stroke-width="1.4"/></svg>
<div class="t" style="left:760px;top:117px;font-size:15px;line-height:17px;color:#2c2c2c;letter-spacing:-0.14px;">Código e Nome</div>
<svg style="left:740px;top:140px" width="12" height="12" viewBox="0 0 12 12"><circle cx="6" cy="6" r="5" fill="#f8f8f8"/><path d="M9.8 2.2 A5.3 5.3 0 0 1 2.2 9.8" fill="none" stroke="#d8d4cc" stroke-width="1.2"/><path d="M9.8 2.2 A5.3 5.3 0 0 0 2.2 9.8" fill="none" stroke="#383838" stroke-width="1.4"/></svg>
<div class="t" style="left:760px;top:138px;font-size:15px;line-height:17px;color:#2c2c2c;letter-spacing:0.04px;">Dados Básicos</div>
<svg style="left:740px;top:161px" width="12" height="12" viewBox="0 0 12 12"><circle cx="6" cy="6" r="5" fill="#f8f8f8"/><path d="M9.8 2.2 A5.3 5.3 0 0 1 2.2 9.8" fill="none" stroke="#d8d4cc" stroke-width="1.2"/><path d="M9.8 2.2 A5.3 5.3 0 0 0 2.2 9.8" fill="none" stroke="#383838" stroke-width="1.4"/><circle cx="6" cy="6" r="2.1" fill="#101810"/></svg>
<div class="t" style="left:760px;top:159px;font-size:15px;line-height:17px;color:#2c2c2c;letter-spacing:0.24px;">Todos Dados</div>
<svg style="left:930px;top:119px" width="12" height="12" viewBox="0 0 12 12"><circle cx="6" cy="6" r="5" fill="#f8f8f8"/><path d="M9.8 2.2 A5.3 5.3 0 0 1 2.2 9.8" fill="none" stroke="#d8d4cc" stroke-width="1.2"/><path d="M9.8 2.2 A5.3 5.3 0 0 0 2.2 9.8" fill="none" stroke="#383838" stroke-width="1.4"/></svg>
<div class="t" style="left:949px;top:117px;font-size:15px;line-height:17px;color:#2c2c2c;letter-spacing:-0.11px;">Código, Nome E-Mail</div>
<svg style="left:930px;top:140px" width="12" height="12" viewBox="0 0 12 12"><circle cx="6" cy="6" r="5" fill="#f8f8f8"/><path d="M9.8 2.2 A5.3 5.3 0 0 1 2.2 9.8" fill="none" stroke="#d8d4cc" stroke-width="1.2"/><path d="M9.8 2.2 A5.3 5.3 0 0 0 2.2 9.8" fill="none" stroke="#383838" stroke-width="1.4"/></svg>
<div class="t" style="left:949px;top:138px;font-size:15px;line-height:17px;color:#2c2c2c;letter-spacing:-0.21px;">Limite de Crédito</div>
<svg style="left:930px;top:161px" width="12" height="12" viewBox="0 0 12 12"><circle cx="6" cy="6" r="5" fill="#f8f8f8"/><path d="M9.8 2.2 A5.3 5.3 0 0 1 2.2 9.8" fill="none" stroke="#d8d4cc" stroke-width="1.2"/><path d="M9.8 2.2 A5.3 5.3 0 0 0 2.2 9.8" fill="none" stroke="#383838" stroke-width="1.4"/></svg>
<div class="t" style="left:949px;top:159px;font-size:15px;line-height:17px;color:#2c2c2c;letter-spacing:-0.26px;">Sem Compra a X Dias</div>
<div class="a" style="left:737px;top:154px;width:122px;height:26px;border:4px solid #e8141e;"></div>
<svg style="left:758px;top:158px" width="1" height="19"><line x1="0.5" y1="0" x2="0.5" y2="19" stroke="#000" stroke-dasharray="1 1"/></svg>
<div class="a" style="left:726px;top:195px;width:400px;height:1px;background:#408cf2;"></div>
<div class="a" style="left:726px;top:197px;width:399px;height:3px;background:#f7f4c2;"></div>
<div class="a" style="left:726px;top:200px;width:399px;height:19px;background:#f6f6e9;"></div>
<div class="a" style="left:726px;top:219px;width:399px;height:1px;background:#6e6e6e;"></div>
<div class="a" style="left:1124px;top:197px;width:1px;height:23px;background:#8a8a8a;"></div>
<div class="t" style="left:901px;top:199px;font-size:15px;line-height:17px;font-weight:700;letter-spacing:-0.09px;">Ordem</div>
<div class="a" style="left:730px;top:229px;width:392px;height:57px;border:1px solid #808080;box-shadow:inset 1px 1px 0 #ffffff, 1px 1px 0 #ffffff;"></div>
<svg style="left:740px;top:242px" width="12" height="12" viewBox="0 0 12 12"><circle cx="6" cy="6" r="5" fill="#f8f8f8"/><path d="M9.8 2.2 A5.3 5.3 0 0 1 2.2 9.8" fill="none" stroke="#d8d4cc" stroke-width="1.2"/><path d="M9.8 2.2 A5.3 5.3 0 0 0 2.2 9.8" fill="none" stroke="#383838" stroke-width="1.4"/><circle cx="6" cy="6" r="2.1" fill="#101810"/></svg>
<div class="t" style="left:760px;top:240px;font-size:15px;line-height:17px;color:#2c2c2c;letter-spacing:-0.10px;">Alfabetica</div>
<svg style="left:740px;top:264px" width="12" height="12" viewBox="0 0 12 12"><circle cx="6" cy="6" r="5" fill="#f8f8f8"/><path d="M9.8 2.2 A5.3 5.3 0 0 1 2.2 9.8" fill="none" stroke="#d8d4cc" stroke-width="1.2"/><path d="M9.8 2.2 A5.3 5.3 0 0 0 2.2 9.8" fill="none" stroke="#383838" stroke-width="1.4"/></svg>
<div class="t" style="left:760px;top:262px;font-size:15px;line-height:17px;color:#2c2c2c;letter-spacing:-0.11px;">Código</div>
<svg style="left:867px;top:242px" width="12" height="12" viewBox="0 0 12 12"><circle cx="6" cy="6" r="5" fill="#f8f8f8"/><path d="M9.8 2.2 A5.3 5.3 0 0 1 2.2 9.8" fill="none" stroke="#d8d4cc" stroke-width="1.2"/><path d="M9.8 2.2 A5.3 5.3 0 0 0 2.2 9.8" fill="none" stroke="#383838" stroke-width="1.4"/></svg>
<div class="t" style="left:885px;top:240px;font-size:15px;line-height:17px;color:#2c2c2c;letter-spacing:-0.11px;">Cidade</div>
<svg style="left:867px;top:264px" width="12" height="12" viewBox="0 0 12 12"><circle cx="6" cy="6" r="5" fill="#f8f8f8"/><path d="M9.8 2.2 A5.3 5.3 0 0 1 2.2 9.8" fill="none" stroke="#d8d4cc" stroke-width="1.2"/><path d="M9.8 2.2 A5.3 5.3 0 0 0 2.2 9.8" fill="none" stroke="#383838" stroke-width="1.4"/></svg>
<div class="t" style="left:885px;top:262px;font-size:15px;line-height:17px;color:#2c2c2c;letter-spacing:0.25px;">Vendedor</div>
<div class="a" style="left:726px;top:297px;width:400px;height:1px;background:#408cf2;"></div>
<div class="a" style="left:726px;top:299px;width:399px;height:3px;background:#f7f4c2;"></div>
<div class="a" style="left:726px;top:302px;width:399px;height:19px;background:#f6f6e9;"></div>
<div class="a" style="left:726px;top:321px;width:399px;height:1px;background:#6e6e6e;"></div>
<div class="a" style="left:1124px;top:299px;width:1px;height:23px;background:#8a8a8a;"></div>
<div class="t" style="left:825px;top:302px;font-size:15px;line-height:17px;font-weight:700;letter-spacing:0.56px;">Relaciona Última Compra</div>
<div class="a" style="left:730px;top:330px;width:392px;height:34px;border:1px solid #808080;box-shadow:inset 1px 1px 0 #ffffff, 1px 1px 0 #ffffff;"></div>
<svg style="left:740px;top:343px" width="12" height="12" viewBox="0 0 12 12"><circle cx="6" cy="6" r="5" fill="#e4e4e4"/><path d="M9.8 2.2 A5.3 5.3 0 0 1 2.2 9.8" fill="none" stroke="#d8d4cc" stroke-width="1.2"/><path d="M9.8 2.2 A5.3 5.3 0 0 0 2.2 9.8" fill="none" stroke="#909090" stroke-width="1.4"/></svg>
<div class="t" style="left:759px;top:342px;font-size:14px;line-height:16px;color:#a0a0a0;letter-spacing:0.94px;">Sim</div>
<svg style="left:930px;top:343px" width="12" height="12" viewBox="0 0 12 12"><circle cx="6" cy="6" r="5" fill="#e4e4e4"/><path d="M9.8 2.2 A5.3 5.3 0 0 1 2.2 9.8" fill="none" stroke="#d8d4cc" stroke-width="1.2"/><path d="M9.8 2.2 A5.3 5.3 0 0 0 2.2 9.8" fill="none" stroke="#909090" stroke-width="1.4"/><circle cx="6" cy="6" r="2.1" fill="#808080"/></svg>
<div class="t" style="left:949px;top:342px;font-size:14px;line-height:16px;color:#a0a0a0;letter-spacing:0.66px;">Não</div>
<div class="a" style="left:726px;top:374px;width:400px;height:1px;background:#408cf2;"></div>
<div class="a" style="left:726px;top:376px;width:399px;height:3px;background:#f7f4c2;"></div>
<div class="a" style="left:726px;top:379px;width:399px;height:20px;background:#f6f6e9;"></div>
<div class="a" style="left:726px;top:399px;width:399px;height:1px;background:#6e6e6e;"></div>
<div class="a" style="left:1124px;top:376px;width:1px;height:24px;background:#8a8a8a;"></div>
<div class="t" style="left:835px;top:380px;font-size:15px;line-height:17px;font-weight:700;letter-spacing:0.47px;">Lista de Débito no Final</div>
<div class="a" style="left:730px;top:408px;width:392px;height:41px;border:1px solid #808080;box-shadow:inset 1px 1px 0 #ffffff, 1px 1px 0 #ffffff;"></div>
<svg style="left:740px;top:426px" width="12" height="12" viewBox="0 0 12 12"><circle cx="6" cy="6" r="5" fill="#f8f8f8"/><path d="M9.8 2.2 A5.3 5.3 0 0 1 2.2 9.8" fill="none" stroke="#d8d4cc" stroke-width="1.2"/><path d="M9.8 2.2 A5.3 5.3 0 0 0 2.2 9.8" fill="none" stroke="#383838" stroke-width="1.4"/></svg>
<div class="t" style="left:759px;top:424px;font-size:15px;line-height:17px;color:#2c2c2c;letter-spacing:0.08px;">Sim</div>
<svg style="left:867px;top:426px" width="12" height="12" viewBox="0 0 12 12"><circle cx="6" cy="6" r="5" fill="#f8f8f8"/><path d="M9.8 2.2 A5.3 5.3 0 0 1 2.2 9.8" fill="none" stroke="#d8d4cc" stroke-width="1.2"/><path d="M9.8 2.2 A5.3 5.3 0 0 0 2.2 9.8" fill="none" stroke="#383838" stroke-width="1.4"/><circle cx="6" cy="6" r="2.1" fill="#101810"/></svg>
<div class="t" style="left:885px;top:424px;font-size:15px;line-height:17px;color:#2c2c2c;letter-spacing:-0.27px;">Não</div>
<svg style="left:993px;top:426px" width="12" height="12" viewBox="0 0 12 12"><circle cx="6" cy="6" r="5" fill="#f8f8f8"/><path d="M9.8 2.2 A5.3 5.3 0 0 1 2.2 9.8" fill="none" stroke="#d8d4cc" stroke-width="1.2"/><path d="M9.8 2.2 A5.3 5.3 0 0 0 2.2 9.8" fill="none" stroke="#383838" stroke-width="1.4"/></svg>
<div class="t" style="left:1012px;top:424px;font-size:15px;line-height:17px;color:#2c2c2c;letter-spacing:-0.06px;">Atrasado</div>
<div class="a" style="left:726px;top:458px;width:400px;height:1px;background:#408cf2;"></div>
<div class="a" style="left:726px;top:460px;width:399px;height:3px;background:#f7f4c2;"></div>
<div class="a" style="left:726px;top:463px;width:399px;height:18px;background:#f6f6e9;"></div>
<div class="a" style="left:726px;top:481px;width:399px;height:1px;background:#6e6e6e;"></div>
<div class="a" style="left:1124px;top:460px;width:1px;height:22px;background:#8a8a8a;"></div>
<div class="t" style="left:796px;top:463px;font-size:15px;line-height:17px;font-weight:700;letter-spacing:0.67px;">Só os Marcados para Mala-Direta</div>
<div class="a" style="left:730px;top:490px;width:392px;height:35px;border:1px solid #808080;box-shadow:inset 1px 1px 0 #ffffff, 1px 1px 0 #ffffff;"></div>
<div class="a" style="left:730px;top:490px;width:392px;height:35px;border:2px solid #6e6e6e;"></div>
<svg style="left:740px;top:504px" width="12" height="12" viewBox="0 0 12 12"><circle cx="6" cy="6" r="5" fill="#f8f8f8"/><path d="M9.8 2.2 A5.3 5.3 0 0 1 2.2 9.8" fill="none" stroke="#d8d4cc" stroke-width="1.2"/><path d="M9.8 2.2 A5.3 5.3 0 0 0 2.2 9.8" fill="none" stroke="#383838" stroke-width="1.4"/></svg>
<div class="t" style="left:759px;top:502px;font-size:15px;line-height:17px;color:#2c2c2c;letter-spacing:0.08px;">Sim</div>
<svg style="left:930px;top:504px" width="12" height="12" viewBox="0 0 12 12"><circle cx="6" cy="6" r="5" fill="#f8f8f8"/><path d="M9.8 2.2 A5.3 5.3 0 0 1 2.2 9.8" fill="none" stroke="#d8d4cc" stroke-width="1.2"/><path d="M9.8 2.2 A5.3 5.3 0 0 0 2.2 9.8" fill="none" stroke="#383838" stroke-width="1.4"/><circle cx="6" cy="6" r="2.1" fill="#101810"/></svg>
<div class="t" style="left:949px;top:502px;font-size:15px;line-height:17px;color:#2c2c2c;letter-spacing:-0.27px;">Não</div>
<div class="a" style="left:892px;top:615px;width:233px;height:52px;border:1px solid;border-color:#808080 #ffffff #ffffff #808080;"></div>
<div class="a" style="left:896px;top:617px;width:133px;height:48px;background:#d4d0c8;border:1px solid;border-color:#ffffff #404040 #404040 #ffffff;box-shadow:inset -1px -1px 0 #808080;"></div>
<div class="a" style="left:1029px;top:617px;width:95px;height:48px;background:#d4d0c8;border:1px solid;border-color:#ffffff #404040 #404040 #ffffff;box-shadow:inset -1px -1px 0 #808080;"></div>
<svg style="left:912px;top:622px" width="35" height="36" viewBox="912 622 35 36"><path d="M920.5 629 H929.5 L932.5 632 V640 H924 L923 633 Z" fill="#a8cdf4" stroke="#80a8d8" stroke-width="0.6"/><path d="M921 640 L930 638 L940 641.5 V646 L930 644 L917.5 643.5 Z" fill="#e4e4e4" stroke="#8a8a8a" stroke-width="0.7"/><path d="M917 643 L930 644.5 L940 646 V650 L930 654 L917.5 650 Z" fill="#c4c4c4" stroke="#6a6a6a" stroke-width="0.7"/><path d="M918 647 L928 649 V653 L918 650 Z" fill="#f8f8f8"/><path d="M929 650 L939 647.5 V650 L929 653 Z" fill="#202820"/><rect x="936" y="629.5" width="5" height="5" fill="#fff" stroke="#202020" stroke-width="1.2"/><rect x="936" y="637" width="5" height="5" fill="#fff" stroke="#202020" stroke-width="1.2"/><path d="M936.5 632 L938.3 634 L943 628 M936.5 639.5 L938.3 641.5 L943 635.5" stroke="#e81010" stroke-width="1.3" fill="none"/></svg>
<div class="t" style="left:948px;top:634px;font-size:14px;line-height:16px;font-weight:700;color:#101010;letter-spacing:0.57px;">Imprimir</div>
<div class="a" style="left:948px;top:649px;width:5px;height:1px;background:#101010;"></div>
<svg style="left:1040px;top:622px" width="35" height="36" viewBox="1040 622 35 36"><rect x="1058.5" y="630" width="10" height="20.5" fill="#d4e6f8" stroke="#3050b0" stroke-width="1"/><rect x="1059.5" y="641" width="8" height="8.5" fill="#50604e"/><path d="M1048.5 631.5 L1058.5 628.5 V653.5 L1048.5 650.5 Z" fill="#5088e0" stroke="#2a48a0" stroke-width="1"/><path d="M1049.5 632.5 L1057 630.5 V641 L1049.5 642 Z" fill="#6aa8f8"/><path d="M1058.6 628 V654" stroke="#1a3080" stroke-width="1.6"/></svg>
<div class="t" style="left:1076px;top:634px;font-size:14px;line-height:16px;font-weight:700;color:#101010;letter-spacing:1.01px;">Sair</div>
<div class="a" style="left:1076px;top:649px;width:11px;height:1px;background:#101010;"></div>
</body></html>
